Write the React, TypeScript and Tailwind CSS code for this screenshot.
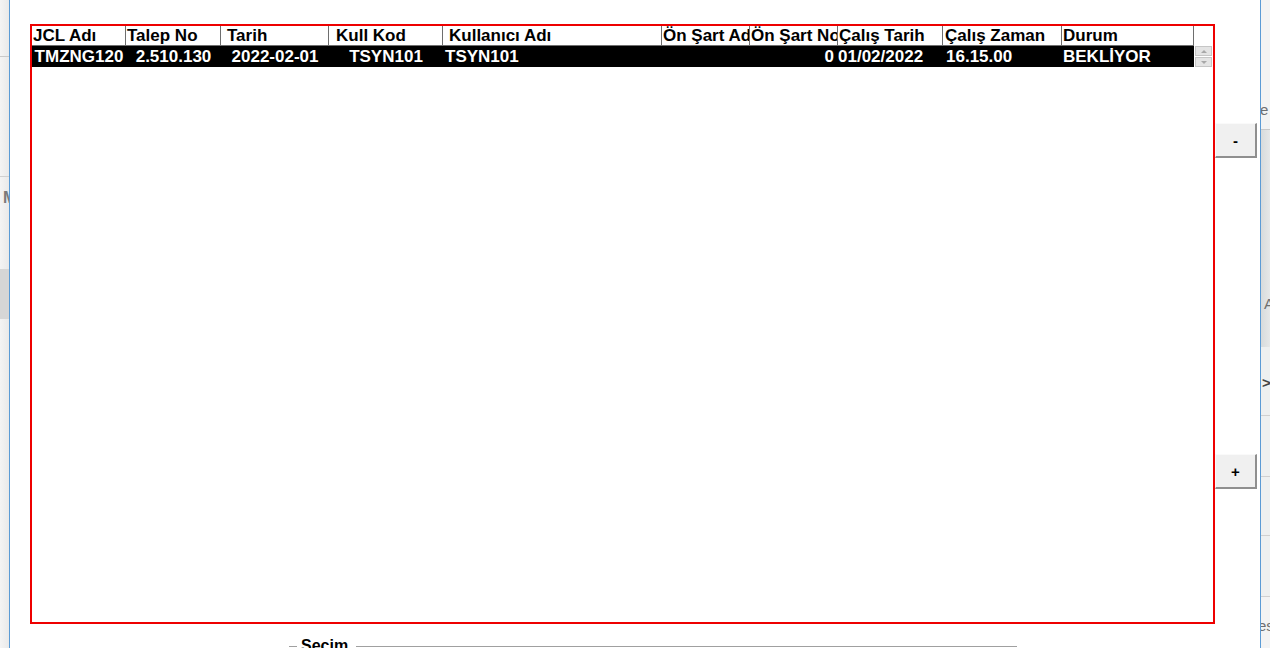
import React from "react";

type Col = { w: number; head: string; hpl: number; val: string; align: "left" | "center" | "right"; vpad: number };

const cols: Col[] = [
  { w: 94, head: "JCL Adı", hpl: 1, val: "TMZNG120", align: "center", vpad: 0 },
  { w: 95, head: "Talep No", hpl: 1, val: "2.510.130", align: "center", vpad: 0 },
  { w: 108, head: "Tarih", hpl: 6, val: "2022-02-01", align: "center", vpad: 0 },
  { w: 114, head: "Kull Kod", hpl: 7, val: "TSYN101", align: "center", vpad: 0 },
  { w: 219, head: "Kullanıcı Adı", hpl: 6, val: "TSYN101", align: "left", vpad: 2 },
  { w: 88, head: "Ön Şart Adı", hpl: 1, val: "", align: "left", vpad: 0 },
  { w: 88, head: "Ön Şart No", hpl: 1, val: "0", align: "right", vpad: 4 },
  { w: 105, head: "Çalış Tarih", hpl: 1, val: "01/02/2022", align: "left", vpad: 0 },
  { w: 119, head: "Çalış Zaman", hpl: 2, val: "16.15.00", align: "left", vpad: 3 },
  { w: 132, head: "Durum", hpl: 1, val: "BEKLİYOR", align: "left", vpad: 1 },
];

function SideButton({ label }: { label: string }) {
  return (
    <div className="w-[42px] h-[35px] flex items-center justify-center bg-[#f0f0f0] border-t border-l border-t-[#fafafa] border-l-[#fafafa] border-r-2 border-b-2 border-r-[#8f8f8f] border-b-[#8f8f8f] text-[15px] font-bold text-black leading-none">
      {label}
    </div>
  );
}

export default function App() {
  return (
    <div className="w-[1270px] h-[648px] overflow-hidden flex bg-white font-['Liberation_Sans',Arial,sans-serif]">
      {/* left strip */}
      <div className="w-[10px] shrink-0 flex flex-col bg-[#efefef] border-r border-[#5b9bd5] overflow-hidden">
        <div className="h-[57px] border-b border-[#c9c9c9] bg-gradient-to-r from-[#f4f4f4] to-[#e9e9e9]" />
        <div className="h-[120px] border-b border-[#d0d0d0] bg-gradient-to-r from-[#f4f4f4] to-[#e9e9e9]" />
        <div className="h-[92px] pt-[12px] pl-[3px] text-[16px] leading-[18px] font-bold text-[#7a7a7a] bg-gradient-to-r from-[#f4f4f4] to-[#e9e9e9]">
          M
        </div>
        <div className="h-[50px] bg-[#d6d6d6]" />
        <div className="flex-1 bg-gradient-to-r from-[#f4f4f4] to-[#e9e9e9]" />
      </div>

      {/* main area */}
      <div className="w-[1250px] shrink-0 flex flex-col pl-[20px] pt-[24px] bg-white">
        <div className="flex">
          {/* grid */}
          <div className="w-[1185px] h-[600px] border-2 border-[#ee0000] bg-white flex flex-col text-[17px] leading-[19px] font-bold">
            <div className="flex h-[20px]">
              <div className="flex border-b border-[#6e6e6e] h-[20px]">
                {cols.map((c) => (
                  <div
                    key={c.head}
                    className="h-[19px] border-r border-[#6e6e6e] overflow-hidden whitespace-nowrap text-black"
                    style={{ width: c.w, paddingLeft: c.hpl }}
                  >
                    {c.head}
                  </div>
                ))}
              </div>
              <div className="flex-1 bg-white" />
            </div>
            <div className="flex h-[21px]">
              <div className="flex bg-black text-white leading-[21px]">
                {cols.map((c) => (
                  <div
                    key={c.head}
                    className="h-[21px] overflow-hidden whitespace-nowrap"
                    style={{
                      width: c.w,
                      textAlign: c.align,
                      paddingLeft: c.align === "left" ? c.vpad : 0,
                      paddingRight: c.align === "right" ? c.vpad : 0,
                    }}
                  >
                    {c.val}
                  </div>
                ))}
              </div>
              <div className="flex-1 flex flex-col gap-[1px] px-[1px] pt-[0px]">
                <div className="h-[10px] bg-[#e4e4e4] border border-[#c6c6c6] flex items-center justify-center">
                  <div className="w-0 h-0 border-l-[3px] border-r-[3px] border-b-[3px] border-l-transparent border-r-transparent border-b-[#a8a8a8]" />
                </div>
                <div className="h-[10px] bg-[#e4e4e4] border border-[#c6c6c6] flex items-center justify-center">
                  <div className="w-0 h-0 border-l-[3px] border-r-[3px] border-t-[3px] border-l-transparent border-r-transparent border-t-[#a8a8a8]" />
                </div>
              </div>
            </div>
          </div>

          {/* side buttons */}
          <div className="w-[42px] flex flex-col pt-[99px] gap-[296px]">
            <SideButton label="-" />
            <SideButton label="+" />
          </div>
        </div>

        {/* Seçim group */}
        <div className="ml-[259px] mt-[13px] w-[728px] flex items-start">
          <div className="w-[8px] mt-[9px] h-[2px] border-t border-[#a0a0a0] bg-white" />
          <div className="ml-[3px] px-[1px] text-[16px] leading-[18px] font-bold text-black">Seçim</div>
          <div className="ml-[7px] flex-1 mt-[9px] h-[2px] border-t border-[#a0a0a0] bg-white" />
        </div>
      </div>

      {/* right strip */}
      <div className="w-[10px] shrink-0 flex flex-col border-l border-[#5b9bd5] overflow-hidden text-[#6f6f6f] text-[15px] leading-[16px]">
        <div className="h-[130px] shrink-0 border-b border-[#c8c8c8] bg-[#f3f3f3] pt-[102px] -ml-[1px] whitespace-nowrap">e</div>
        <div className="h-[217px] shrink-0 bg-gradient-to-r from-[#d7dbdc] to-[#e6e8e8] pt-[166px] pl-[3px]">A</div>
        <div className="h-[69px] shrink-0 border-b border-[#d0d0d0] bg-[#eef0f0] pt-[28px] pl-[1px] font-bold text-[#444]">&gt;</div>
        <div className="h-[61px] shrink-0 border-b border-[#d0d0d0] bg-[#eef0f0]" />
        <div className="h-[59px] shrink-0 border-b border-[#d0d0d0] bg-[#eef0f0]" />
        <div className="h-[61px] shrink-0 border-b border-[#d0d0d0] bg-[#eef0f0]" />
        <div className="flex-1 bg-[#f3f3f3] pt-[21px] -ml-[3px] whitespace-nowrap">es</div>
      </div>
    </div>
  );
}
